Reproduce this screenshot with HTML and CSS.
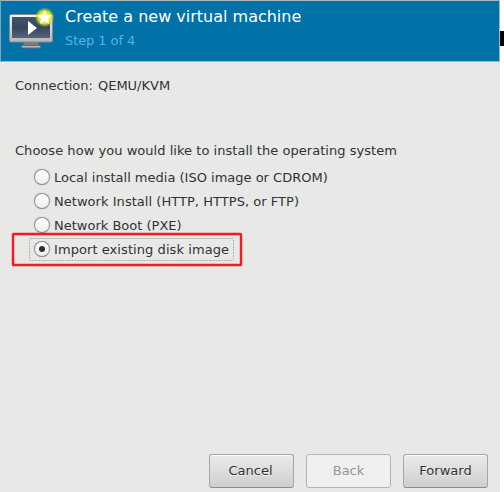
FILE: index.html
```html
<!DOCTYPE html>
<html lang="en">
<head>
<meta charset="utf-8">
<title>Create a new virtual machine</title>
<link rel="stylesheet" href="styles.css">
</head>
<body>
<div class="desktop">
  <main class="window">
    <header class="header">
      <svg class="logo" width="48" height="44" viewBox="0 0 48 44">
        <defs>
          <linearGradient id="screen" x1="0" y1="0" x2="0" y2="1"><stop offset="0" stop-color="#43556b"/><stop offset=".5" stop-color="#36465c"/><stop offset="1" stop-color="#53637a"/></linearGradient>
          <linearGradient id="frame" x1="0" y1="0" x2="0" y2="1"><stop offset="0" stop-color="#f4f4f2"/><stop offset="1" stop-color="#b5b5b5"/></linearGradient>
          <radialGradient id="glow"><stop offset="0" stop-color="#fff34a"/><stop offset=".62" stop-color="#e3e622"/><stop offset="1" stop-color="#a8cf20" stop-opacity="0"/></radialGradient>
        </defs>
        <path d="M15 35h14l1 4H14z" fill="#777b80"/>
        <rect x="12.500" y="38.500" width="19" height="2.500" rx="1" fill="#b4b4b4" stroke="#6b6e70"/>
        <rect x=".5" y="7.500" width="43" height="27.500" rx="1.500" fill="url(#frame)" stroke="#88898a"/>
        <rect x="3" y="10" width="38" height="21" fill="url(#screen)"/>
        <path d="M19 14v14l9-7z" fill="#fff"/>
        <circle cx="35.700" cy="10.300" r="10" fill="url(#glow)"/>
        <path transform="translate(.2 .3)" d="M35.500 3.500l1.900 4.300 4.700.5-3.500 3.200 1 4.600-4.100-2.400-4.100 2.400 1-4.600-3.500-3.200 4.700-.5z" fill="#fff" stroke="#fff" stroke-width=".7"/>
      </svg>
      <div class="heading">
        <h1 class="title">Create a new virtual machine</h1>
        <p class="step">Step 1 of 4</p>
      </div>
    </header>
    <section class="content">
      <p class="connection"><span>Connection:</span><span>QEMU/KVM</span></p>
      <p class="question">Choose how you would like to install the operating system</p>
      <div class="options">
        <div class="option"><i class="radio"></i><span>Local install media (ISO image or CDROM)</span></div>
        <div class="option"><i class="radio"></i><span class="wide">Network Install (HTTP, HTTPS, or FTP)</span></div>
        <div class="option"><i class="radio"></i><span>Network Boot (PXE)</span></div>
        <div class="option selected"><i class="radio checked"></i><span class="wider">Import existing disk image</span>
          <svg class="highlight" width="232" height="36" viewBox="0 0 232 36"><rect x="2" y="2" width="228" height="31" rx=".5" fill="none" stroke="#f71822" stroke-width="2.400"/></svg>
          <svg class="focus" width="206" height="24"><rect x=".5" y=".5" width="204" height="22" rx="1" fill="none" stroke="#adb0ac" stroke-dasharray="2 1"/></svg>
        </div>
      </div>
    </section>
    <footer class="actions">
      <button class="button">Cancel</button>
      <button class="button" disabled>Back</button>
      <button class="button">Forward</button>
    </footer>
  </main>
  <aside class="edge"><div class="edge-mark"></div></aside>
</div>
</body>
</html>
```
FILE: styles.css
```css
* { box-sizing: border-box; }
body { margin: 0; background: #fff; font: 13px/16px "DejaVu Sans", sans-serif; color: #2e3436; overflow: hidden; }
h1, p { margin: 0; font-weight: normal; }
.desktop { display: flex; width: 504px; height: 492px; }
.window { width: 500px; display: flex; flex-direction: column; background: #e8e8e6; }
.header { height: 62px; display: flex; background: #0072a8; border: 1px solid #a6b5ba; border-left-color: #7fa5b5; padding: 6px 0 0 8px; }
.logo { flex: none; }
.heading { padding-left: 8px; }
.title { font-size: 16px; line-height: 20px; color: #fff; white-space: nowrap; }
.step { color: #5bb1e5; margin-top: 6px; letter-spacing: -.08px; }
.content { flex: 1; padding: 16px 15px; white-space: nowrap; }
.connection { display: flex; gap: 5px; }
.question { margin-top: 49px; letter-spacing: .035px; }
.options { margin: 7px 0 0 19px; }
.option { height: 24px; display: flex; align-items: center; gap: 4px; position: relative; }
.wide { letter-spacing: .04px; }
.wider { letter-spacing: .07px; }
.radio { width: 16px; height: 16px; margin-bottom: 2px; flex: none; border: 1px solid #8f918f; border-bottom-color: #858785; border-radius: 50%; background: linear-gradient(#fff, #ededeb); box-shadow: 0 0 1px #a9aba9; }
.radio.checked { display: grid; place-items: center; }
.radio.checked::before { content: ""; width: 6px; height: 6px; background: #2a3032; border-radius: 50%; }
.highlight { position: absolute; left: -23px; top: -6px; }
.focus { position: absolute; left: -5px; top: 0; }
.actions { display: flex; justify-content: flex-end; gap: 12px; padding: 0 12px 4px 0; }
.button { width: 85px; height: 34px; padding: 0 0 1px; font: inherit; color: #2e3436; border: 1px solid #a5a7a4; border-bottom-color: #8b8d8a; border-radius: 3px; background: linear-gradient(#ebebea, #cececc); box-shadow: inset 0 1px #fafafa; text-shadow: 0 1px #f4f4f4; }
.button:disabled { color: #949795; background: #f0f0f0; border-color: #b2b4b1; box-shadow: none; text-shadow: none; }
.button:first-child { padding-right: 2px; }
.edge { width: 4px; padding-top: 31px; background: #fff; }
.edge-mark { height: 15px; background: #000; }
```
